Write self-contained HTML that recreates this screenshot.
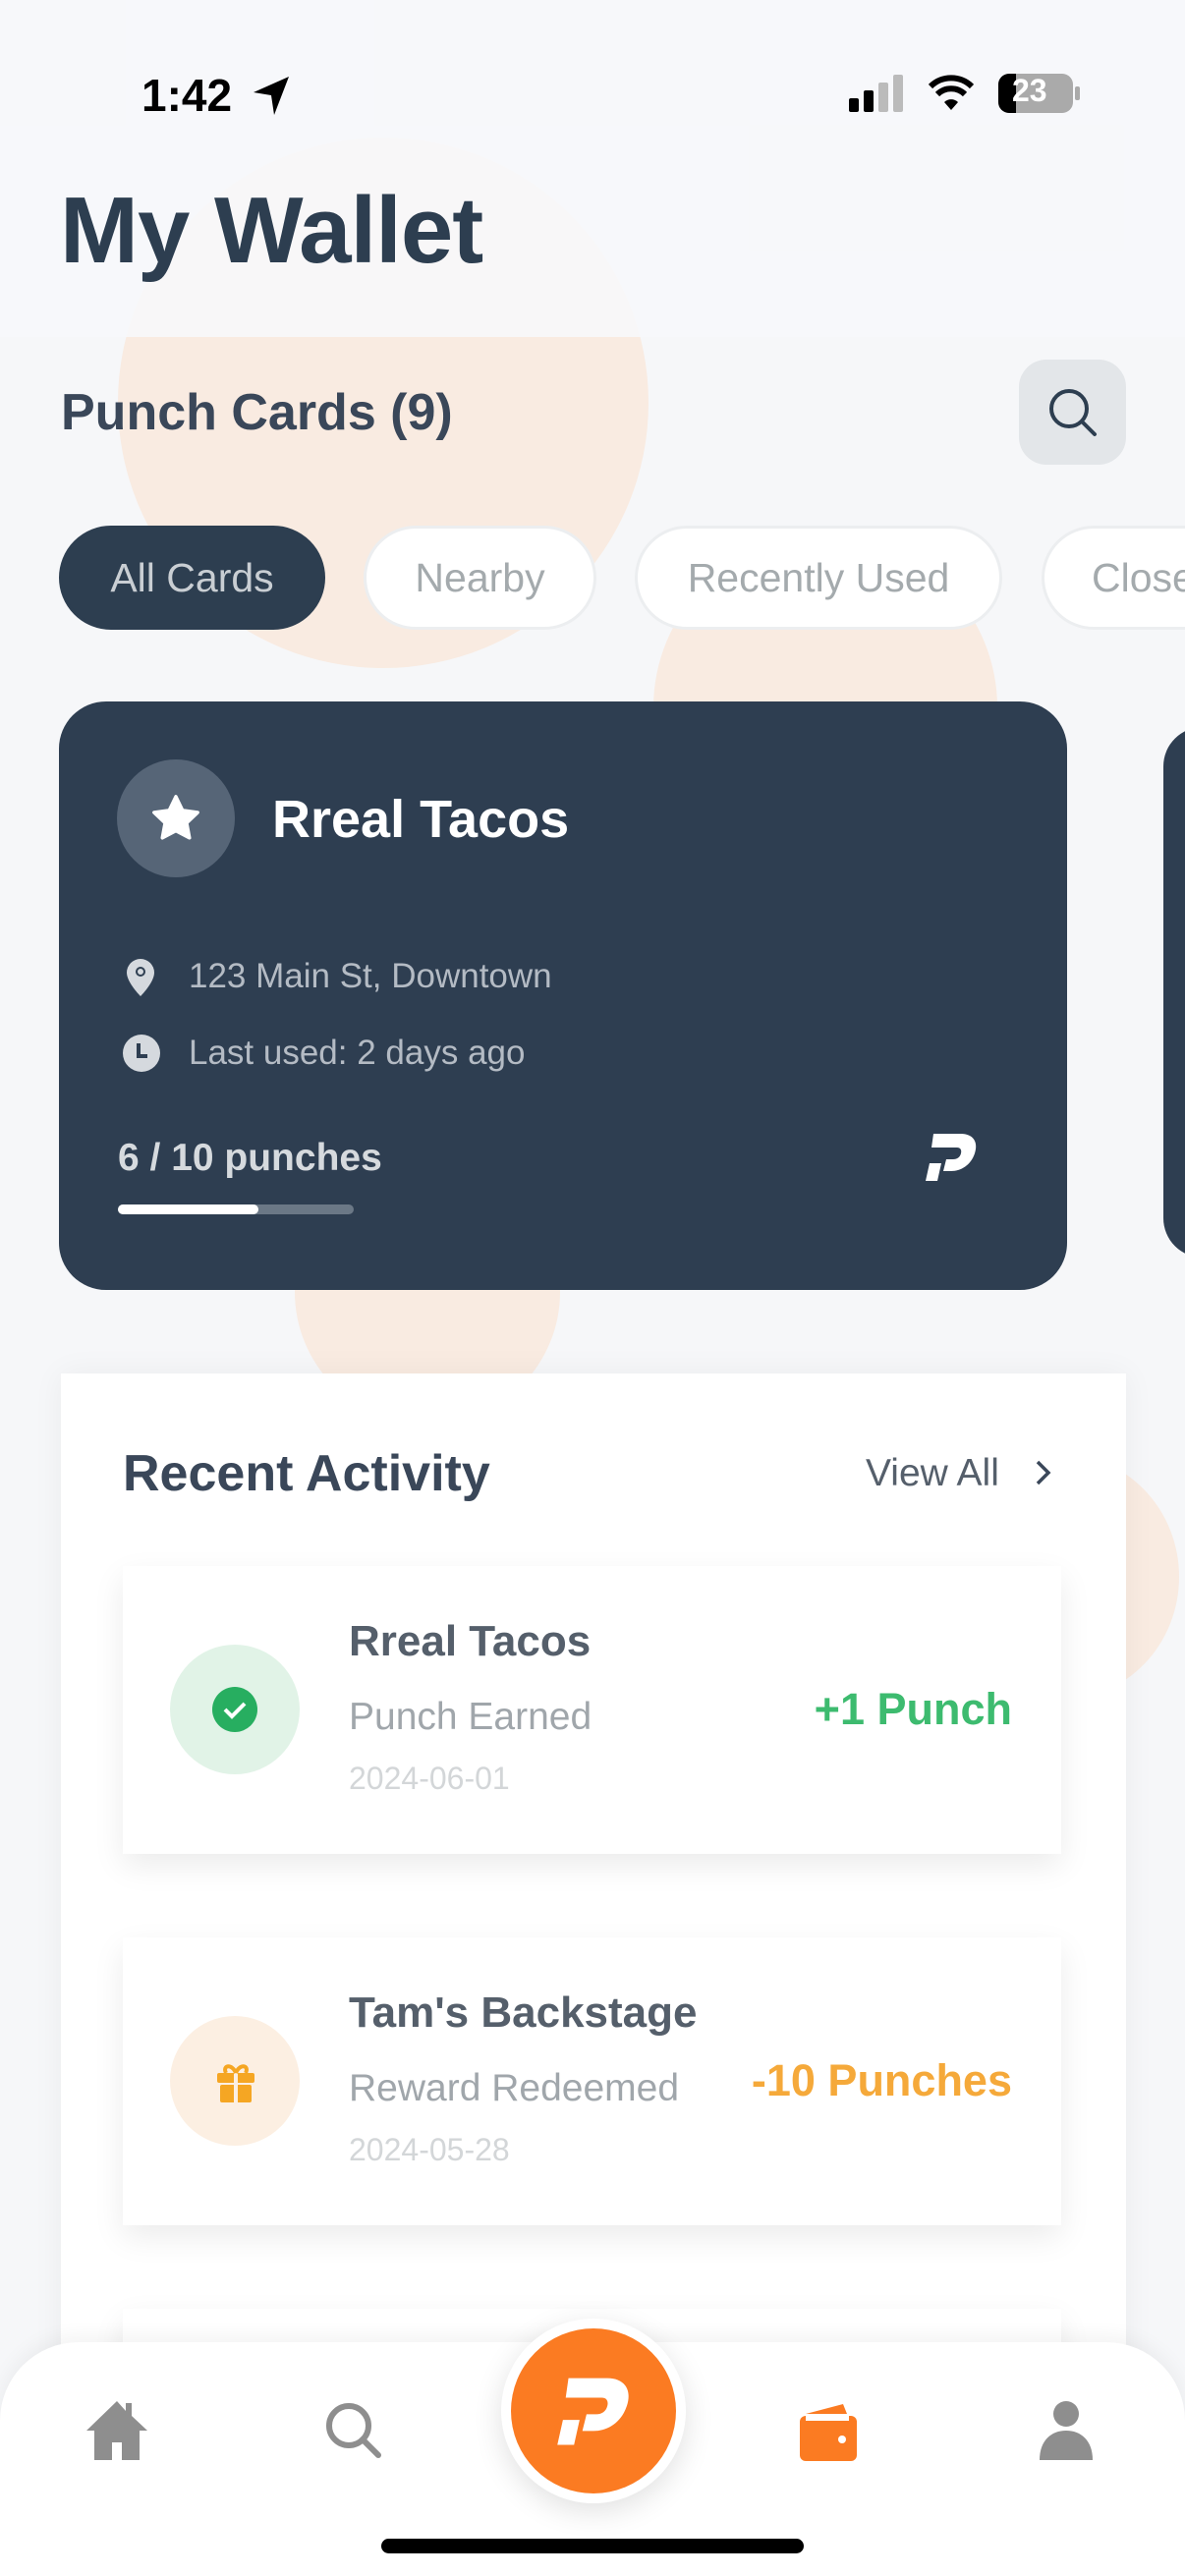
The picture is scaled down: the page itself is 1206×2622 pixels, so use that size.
<!DOCTYPE html>
<html style="width:1206px;height:2622px;overflow:hidden"><head><meta charset="utf-8"><style>
*{margin:0;padding:0;box-sizing:border-box}
body{width:1206px;height:2622px;overflow:hidden;background:#f6f7f9;font-family:"Liberation Sans",sans-serif;position:relative}
.abs{position:absolute}
.blob{position:absolute;border-radius:50%;background:#f9ebe1}
.chip{position:absolute;top:535px;height:106px;border-radius:53px;background:#fff;border:3px solid #eceef0;color:#a4aaad;font-size:41px;display:flex;align-items:center;justify-content:center}
.item{position:absolute;left:125px;width:955px;height:293px;background:#fff;box-shadow:0 12px 30px rgba(0,0,0,.08)}
.ic{position:absolute;left:173px;top:80px;width:132px;height:132px;border-radius:50%}
.t1{position:absolute;left:230px;top:52px;font-size:44px;font-weight:bold;color:#555f6b}
.t2{position:absolute;left:230px;top:132px;font-size:39px;color:#a0a6ab}
.t3{position:absolute;left:230px;top:198px;font-size:32px;color:#d3d6d8}
.amt{position:absolute;right:50px;top:120px;font-size:45px;font-weight:bold}
</style></head><body>
<div class="blob" style="left:120px;top:140px;width:540px;height:540px"></div>
<div class="blob" style="left:665px;top:545px;width:350px;height:350px"></div>
<div class="blob" style="left:300px;top:1180px;width:270px;height:270px"></div>
<div class="blob" style="left:960px;top:1480px;width:240px;height:250px"></div>
<div class="abs" style="left:0;top:0;width:1206px;height:343px;background:rgba(247,248,250,.88)"></div>

<div class="abs" style="left:144px;top:70px;font-size:46px;font-weight:bold;color:#000">1:42</div>
<svg class="abs" style="left:254px;top:74px" width="44" height="48" viewBox="0 0 44 48"><path d="M40 4L4 20l18 3 3 20z" fill="#000"/></svg>
<div class="abs" style="left:864px;top:100px;width:10px;height:14px;background:#000;border-radius:2px"></div>
<div class="abs" style="left:879px;top:92px;width:10px;height:22px;background:#000;border-radius:2px"></div>
<div class="abs" style="left:894px;top:84px;width:10px;height:30px;background:#bbb;border-radius:2px"></div>
<div class="abs" style="left:909px;top:76px;width:10px;height:38px;background:#bbb;border-radius:2px"></div>
<svg class="abs" style="left:944px;top:74px" width="48" height="40" viewBox="0 0 48 40"><path d="M24 38l-7-8a10 10 0 0 1 14 0z" fill="#000"/><path d="M10 22a20 20 0 0 1 28 0M3 14a30 30 0 0 1 42 0" stroke="#000" stroke-width="6" fill="none"/></svg>
<div class="abs" style="left:1016px;top:75px;width:76px;height:40px;border-radius:11px;background:#aaa;overflow:hidden"><div style="width:18px;height:40px;background:#000"></div></div>
<div class="abs" style="left:1030px;top:74px;font-size:32px;font-weight:bold;color:#fff">23</div>
<div class="abs" style="left:1094px;top:88px;width:5px;height:14px;background:#aaa;border-radius:2px"></div>

<div class="abs" style="left:61px;top:180px;font-size:96px;font-weight:bold;color:#2d3e50;letter-spacing:-1px">My Wallet</div>
<div class="abs" style="left:62px;top:390px;font-size:52px;font-weight:bold;color:#3a4759">Punch Cards (9)</div>
<div class="abs" style="left:1037px;top:366px;width:109px;height:107px;border-radius:28px;background:#e3e6e9"></div>
<svg class="abs" style="left:1062px;top:390px" width="60" height="60" viewBox="0 0 60 60"><circle cx="26" cy="26" r="18" stroke="#2d3e50" stroke-width="4" fill="none"/><path d="M39 39l13 13" stroke="#2d3e50" stroke-width="4" stroke-linecap="round"/></svg>

<div class="chip" style="left:60px;width:271px;background:#2d3e50;border-color:#2d3e50;color:#c9ced3">All Cards</div>
<div class="chip" style="left:370px;width:237px">Nearby</div>
<div class="chip" style="left:646px;width:374px">Recently Used</div>
<div class="chip" style="left:1060px;width:220px;justify-content:flex-start;padding-left:48px">Closest</div>

<div class="abs" style="left:60px;top:714px;width:1026px;height:599px;border-radius:48px;background:#2e3e51"></div>
<div class="abs" style="left:1184px;top:740px;width:80px;height:540px;border-radius:48px;background:#2e3e51"></div>
<div class="abs" style="left:119px;top:773px;width:120px;height:120px;border-radius:50%;background:#566577"></div>
<svg class="abs" style="left:151px;top:805px" width="56" height="56" viewBox="0 0 24 24"><path d="M12 2.5l2.9 6 6.6.9-4.8 4.6 1.2 6.5L12 17.4l-5.9 3.1 1.2-6.5L2.5 9.4l6.6-.9z" fill="#fff" stroke="#fff" stroke-width="1.5" stroke-linejoin="round"/></svg>
<div class="abs" style="left:277px;top:803px;font-size:54px;font-weight:bold;color:#fff">Rreal Tacos</div>
<svg class="abs" style="left:126px;top:974px" width="34" height="42" viewBox="0 0 34 42"><path d="M17 2a14 14 0 0 1 14 14c0 10-14 24-14 24S3 26 3 16A14 14 0 0 1 17 2z" fill="#d5d9de"/><circle cx="17" cy="15" r="5" fill="#2e3e51"/><circle cx="17" cy="15" r="3" fill="#d5d9de"/></svg>
<div class="abs" style="left:192px;top:974px;font-size:35px;color:#b4bbc4">123 Main St, Downtown</div>
<svg class="abs" style="left:124px;top:1052px" width="40" height="40" viewBox="0 0 40 40"><circle cx="20" cy="20" r="19" fill="#d5d9de"/><path d="M17 10v13h9" stroke="#2e3e51" stroke-width="4" fill="none"/></svg>
<div class="abs" style="left:192px;top:1052px;font-size:35px;color:#b4bbc4">Last used: 2 days ago</div>
<div class="abs" style="left:120px;top:1157px;font-size:39px;font-weight:bold;color:#d6dade">6 / 10 punches</div>
<div class="abs" style="left:120px;top:1226px;width:240px;height:10px;border-radius:5px;background:#6b7886"><div style="width:143px;height:10px;border-radius:5px;background:#fff"></div></div>
<svg class="abs" style="left:936px;top:1150px" width="64" height="58" viewBox="0 0 64 58"><path d="M14 4h28c12 0 18 8 14 20s-14 18-24 18h-8l3-12h7c4 0 7-2 8-6s-1-6-4-6H12z M10 34h12l-4 18H6z" fill="#fff"/></svg>

<div class="abs" style="left:62px;top:1398px;width:1084px;height:1224px;background:#fff;box-shadow:0 0 30px rgba(0,0,0,.05)"></div>
<div class="abs" style="left:125px;top:1470px;font-size:52px;font-weight:bold;color:#3a4759">Recent Activity</div>
<div class="abs" style="left:881px;top:1478px;font-size:39px;color:#555f6b">View All</div>
<svg class="abs" style="left:1050px;top:1482px" width="24" height="34" viewBox="0 0 24 34"><path d="M6 6l11 11L6 28" stroke="#3a4759" stroke-width="3.5" fill="none"/></svg>

<div class="item" style="top:1594px">
<div class="ic" style="left:48px;background:#e1f3e7"></div>
<svg class="abs" style="left:91px;top:123px" width="46" height="46" viewBox="0 0 46 46"><circle cx="23" cy="23" r="23" fill="#27ae60"/><path d="M13 23l7 7 13-13" stroke="#fff" stroke-width="4" fill="none"/></svg>
<div class="t1">Rreal Tacos</div><div class="t2">Punch Earned</div><div class="t3">2024-06-01</div>
<div class="amt" style="color:#3dbb6f">+1 Punch</div>
</div>
<div class="item" style="top:1972px">
<div class="ic" style="left:48px;background:#fcefe2"></div>
<svg class="abs" style="left:92px;top:124px" width="46" height="46" viewBox="0 0 46 46"><rect x="4" y="14" width="38" height="10" rx="2" fill="#f5a623"/><rect x="7" y="26" width="32" height="18" rx="2" fill="#f5a623"/><rect x="21" y="14" width="4" height="30" fill="#fcefe2"/><path d="M23 14c-4-10-14-8-10 0M23 14c4-10 14-8 10 0" stroke="#f5a623" stroke-width="4" fill="none"/></svg>
<div class="t1">Tam's Backstage</div><div class="t2">Reward Redeemed</div><div class="t3">2024-05-28</div>
<div class="amt" style="color:#f5a93a">-10 Punches</div>
</div>
<div class="item" style="top:2350px;height:100px"></div>

<div class="abs" style="left:0;top:2384px;width:1206px;height:238px;background:#fff;border-radius:80px 80px 0 0;box-shadow:0 -6px 20px rgba(0,0,0,.05)"></div>
<svg class="abs" style="left:86px;top:2440px" width="66" height="66" viewBox="0 0 66 66"><path d="M33 4L2 34h8v30h18V46h10v18h18V34h8L48 19V6h-6v8z" fill="#8e8e8e"/></svg>
<svg class="abs" style="left:328px;top:2442px" width="66" height="66" viewBox="0 0 66 66"><circle cx="27" cy="27" r="20" stroke="#8e8e8e" stroke-width="6" fill="none"/><path d="M41 41l16 16" stroke="#8e8e8e" stroke-width="6" stroke-linecap="round"/></svg>
<div class="abs" style="left:510px;top:2360px;width:188px;height:188px;border-radius:50%;background:#fff;box-shadow:0 8px 30px rgba(0,0,0,.12)"></div>
<div class="abs" style="left:520px;top:2370px;width:168px;height:168px;border-radius:50%;background:#fb7b22"></div>
<svg class="abs" style="left:554px;top:2415px" width="100" height="82" viewBox="0 0 64 58"><path d="M14 4h28c12 0 18 8 14 20s-14 18-24 18h-8l3-12h7c4 0 7-2 8-6s-1-6-4-6H12z M10 34h12l-4 18H6z" fill="#fff"/></svg>
<svg class="abs" style="left:810px;top:2443px" width="66" height="66" viewBox="0 0 66 66"><path d="M10 14l38-10 4 10z" fill="#fb7b22"/><rect x="4" y="16" width="58" height="46" rx="6" fill="#fb7b22"/><rect x="10" y="16" width="44" height="5" fill="#fff"/><circle cx="47" cy="40" r="4" fill="#fff"/></svg>
<svg class="abs" style="left:1052px;top:2440px" width="66" height="66" viewBox="0 0 66 66"><circle cx="33" cy="17" r="13" fill="#8e8e8e"/><path d="M6 64c0-20 12-30 27-30s27 10 27 30z" fill="#8e8e8e"/></svg>
<div class="abs" style="left:388px;top:2584px;width:430px;height:15px;border-radius:8px;background:#000"></div>
</body></html>
